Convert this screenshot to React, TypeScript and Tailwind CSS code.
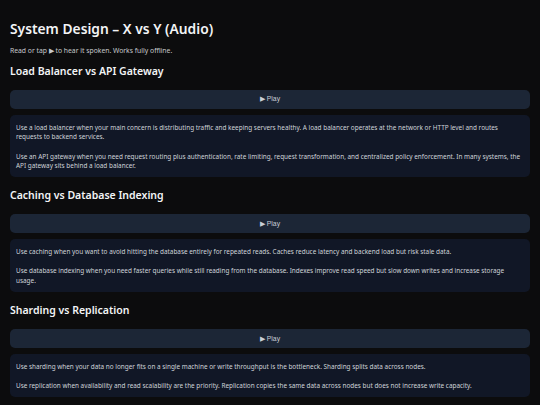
const comparisons = [
  {
    title: "Load Balancer vs API Gateway",
    paragraphs: [
      "Use a load balancer when your main concern is distributing traffic and keeping servers healthy. A load balancer operates at the network or HTTP level and routes requests to backend services.",
      "Use an API gateway when you need request routing plus authentication, rate limiting, request transformation, and centralized policy enforcement. In many systems, the API gateway sits behind a load balancer.",
    ],
  },
  {
    title: "Caching vs Database Indexing",
    paragraphs: [
      "Use caching when you want to avoid hitting the database entirely for repeated reads. Caches reduce latency and backend load but risk stale data.",
      "Use database indexing when you need faster queries while still reading from the database. Indexes improve read speed but slow down writes and increase storage usage.",
    ],
  },
  {
    title: "Sharding vs Replication",
    paragraphs: [
      "Use sharding when your data no longer fits on a single machine or write throughput is the bottleneck. Sharding splits data across nodes.",
      "Use replication when availability and read scalability are the priority. Replication copies the same data across nodes but does not increase write capacity.",
    ],
  },
];

function speak(text: string) {
  if (typeof window === "undefined" || !("speechSynthesis" in window)) return;
  window.speechSynthesis.cancel();
  window.speechSynthesis.speak(new SpeechSynthesisUtterance(text));
}

export default function App() {
  return (
    <div className="min-h-[405px] bg-[#0c0c0d] px-[10px] pt-[18px] pb-4 font-['Noto_Sans',sans-serif] text-[#e5e7eb]">
      <h1 className="text-[13.8px] font-semibold leading-[22px] text-[#f3f4f6]">System Design – X vs Y (Audio)</h1>
      <p className="mt-[6px] text-[6.8px] leading-[10px] text-[#c7c9cc]">
        Read or tap ▶ to hear it spoken. Works fully offline.
      </p>
      {comparisons.map((c) => (
        <section key={c.title} className="mt-[7px] flex flex-col">
          <h2 className="text-[10.5px] font-semibold leading-[16px] text-[#f3f4f6]">{c.title}</h2>
          <button
            onClick={() => speak(c.paragraphs.join(" "))}
            className="mt-[11px] flex h-[19px] w-full items-center justify-center rounded-[5px] bg-[#1c2636] font-['Liberation_Sans',Arial,sans-serif] text-[6.8px] text-[#c9ced6]"
          >
            ▶ Play
          </button>
          <div className="mt-[6px] flex flex-col gap-[10px] rounded-[5px] bg-[#111726] px-[6px] pt-[7.5px] pb-[6.5px] text-[6.4px] leading-[9.6px] text-[#cfd3d9]">
            {c.paragraphs.map((p) => (
              <p key={p}>{p}</p>
            ))}
          </div>
          <div className="h-[3px]" />
        </section>
      ))}
    </div>
  );
}
